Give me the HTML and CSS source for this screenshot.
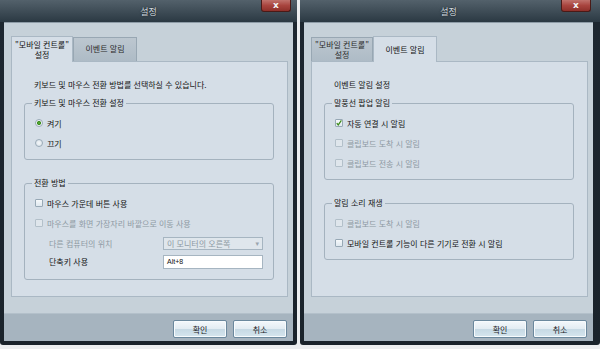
FILE: index.html
```html
<!DOCTYPE html>
<html lang="ko">
<head>
    <meta charset="UTF-8">
    <title>설정</title>
    <link rel="stylesheet" href="styles.css">
</head>
<body>

    <div class="window">
        <div class="titlebar">
            <span></span>
            <span class="title">설정</span>
            <span class="close">x</span>
        </div>
        <div class="client">
            <div class="tabs">
                <div class="tab first active">"모바일 컨트롤"<br>설정</div>
                <div class="tab second">이벤트 알림</div>
            </div>
            <div class="panel">
                <p class="intro">키보드 및 마우스 전환 방법를 선택하실 수 있습니다.</p>

                <fieldset class="group">
                    <legend>키보드 및 마우스 전환 설정</legend>
                    <div class="opt"><span class="radio on"></span>켜기</div>
                    <div class="opt"><span class="radio"></span>끄기</div>
                </fieldset>

                <fieldset class="group">
                    <legend>전환 방법</legend>
                    <div class="opt"><span class="check"></span>마우스 가운데 버튼 사용</div>
                    <div class="opt disabled"><span class="check"></span>마우스를 화면 가장자리 바깥으로 이동 사용</div>
                    <div class="fields">
                        <div class="field disabled">
                            <span class="field-label">다른 컴퓨터의 위치</span>
                            <span class="select">이 모니터의 오른쪽<span class="arrow">▾</span></span>
                        </div>
                        <div class="field">
                            <span class="field-label">단축키 사용</span>
                            <span class="textbox">Alt+8</span>
                        </div>
                    </div>
                </fieldset>
            </div>
            <div class="footer">
                <button>확인</button>
                <button>취소</button>
            </div>
        </div>
    </div>

    <div class="window wide">
        <div class="titlebar">
            <span></span>
            <span class="title">설정</span>
            <span class="close">x</span>
        </div>
        <div class="client">
            <div class="tabs">
                <div class="tab first">"모바일 컨트롤"<br>설정</div>
                <div class="tab second active">이벤트 알림</div>
            </div>
            <div class="panel">
                <p class="intro">이벤트 알림 설정</p>

                <fieldset class="group">
                    <legend>말풍선 팝업 알림</legend>
                    <div class="opt">
                        <span class="check">
                            <svg width="8" height="8" viewBox="0 0 8 8"><path d="M1 4.2 L3 6.6 L7.2 0.6" fill="none" stroke="#3a8a16" stroke-width="1.6"/></svg>
                        </span>자동 연결 시 알림
                    </div>
                    <div class="opt disabled"><span class="check"></span>클립보드 도착 시 알림</div>
                    <div class="opt disabled"><span class="check"></span>클립보드 전송 시 알림</div>
                </fieldset>

                <fieldset class="group">
                    <legend>알림 소리 재생</legend>
                    <div class="opt disabled"><span class="check"></span>클립보드 도착 시 알림</div>
                    <div class="opt"><span class="check"></span>모바일 컨트롤 기능이 다른 기기로 전환 시 알림</div>
                </fieldset>
            </div>
            <div class="footer">
                <button>확인</button>
                <button>취소</button>
            </div>
        </div>
    </div>

</body>
</html>
```

FILE: styles.css
```css
body {
    margin: 0;
    display: flex;
    gap: 3px;
    background: #eceef0;
    font-family: "Noto Sans CJK KR", "Noto Sans", sans-serif;
    font-size: 8px;
    color: #141414;
}
.window {
    width: 297px;
    height: 345px;
    box-sizing: border-box;
    padding: 0 4px 4px;
    display: flex;
    flex-direction: column;
    background: linear-gradient(#53616b 0, #2b3943 22px, #1d2730 22px, #1a232b 100%);
    border-radius: 0 0 3px 3px;
}
.window.wide {
    width: 300px;
    padding-right: 7px;
}
.titlebar {
    height: 22px;
    display: grid;
    grid-template-columns: 1fr auto 1fr;
    align-items: start;
}
.title {
    margin-top: 6px;
    font-size: 9px;
    line-height: 11px;
    color: #d2d9de;
    text-shadow: 0 0 2px #10181e;
}
.close {
    justify-self: end;
    width: 30px;
    height: 12px;
    margin-right: 2px;
    box-sizing: border-box;
    border: 1px solid #4a1a17;
    border-top: none;
    border-radius: 0 0 3px 3px;
    background: linear-gradient(#c0726c, #a8443e 50%, #8e302a);
    color: #f4f4f4;
    font-family: "DejaVu Sans", sans-serif;
    font-weight: bold;
    font-size: 9px;
    line-height: 10px;
    text-align: center;
}
.client {
    flex: 1;
    display: flex;
    flex-direction: column;
    background: #c6d1d9;
    border-top: 1px solid #8e9ca7;
}
.tabs {
    display: flex;
    align-items: flex-end;
    padding: 12px 0 0 7px;
    height: 26px;
}
.tab {
    box-sizing: border-box;
    height: 24px;
    border: 1px solid #98a7b3;
    border-bottom: none;
    background: linear-gradient(#bcc7d0, #aebbc6);
    text-align: center;
    line-height: 10px;
    color: #2b2b2b;
}
.tab.first {
    width: 62px;
    padding-top: 2px;
}
.tab.second {
    width: 64px;
    line-height: 22px;
}
.tab.active {
    height: 26px;
    margin-bottom: -1px;
    position: relative;
    background: #d5dee7;
    border-color: #aab8c4;
    color: #111;
}
.tab.first.active {
    padding-top: 3px;
}
.tab.second.active {
    line-height: 25px;
}
.panel {
    height: 236px;
    box-sizing: border-box;
    margin: 0 5px 0 7px;
    padding: 17px 13px 0 12px;
    background: #d5dee7;
    border: 1px solid #aab8c4;
}
.intro {
    margin: 0 0 7px 10px;
    line-height: 12px;
}
.group {
    margin: 0 0 18px;
    padding: 5px 7px 6px;
    border: 1px solid #a4b2be;
    border-radius: 3px;
}
.group legend {
    padding: 0 2px;
    line-height: 10px;
}
.opt {
    display: flex;
    align-items: center;
    gap: 4px;
    height: 20px;
    margin-left: 3px;
}
.disabled {
    color: #8d99a3;
}
.check {
    width: 8px;
    height: 8px;
    display: flex;
    box-sizing: border-box;
    border: 1px solid #98a9b6;
    border-radius: 1px;
    background: linear-gradient(#f6f9fb, #dfe8ef);
}
.check svg {
    margin: -1px 0 0 0;
}
.disabled .check {
    border-color: #b3c0ca;
    background: #dfe6ec;
}
.radio {
    width: 8px;
    height: 8px;
    box-sizing: border-box;
    border: 1px solid #9aabb8;
    border-radius: 50%;
    background: radial-gradient(circle, #f4f7f9, #d6dfe6);
}
.radio.on {
    background: radial-gradient(circle, #5cb63a 0, #3f8e22 1.6px, #f2f6f8 2.4px, #d6dfe6);
}
.fields {
    padding-bottom: 4px;
}
.field {
    display: flex;
    align-items: center;
    height: 15px;
    margin: 3px 0 0 17px;
}
.field-label {
    width: 114px;
}
.select, .textbox {
    width: 100px;
    box-sizing: border-box;
    border: 1px solid #a6b5c1;
    display: flex;
    align-items: center;
    padding-left: 3px;
}
.select {
    height: 13px;
    background: #dfe6ec;
    color: #8d99a3;
}
.arrow {
    margin-left: auto;
    margin-right: 3px;
    font-size: 7px;
    color: #9aa5ae;
    font-family: "DejaVu Sans", sans-serif;
}
.textbox {
    height: 14px;
    background: #fff;
    font-family: "Liberation Sans", sans-serif;
    font-size: 7px;
    color: #111;
}
.footer {
    margin-top: 16px;
    flex: 1;
    display: flex;
    justify-content: flex-end;
    align-items: flex-start;
    gap: 6px;
    padding: 6px 6px 0 0;
    background: #a6b4bf;
    border-top: 1px solid #b3c0ca;
}
button {
    width: 54px;
    height: 18px;
    padding: 0;
    border: 1px solid #6b889d;
    border-radius: 2px;
    background: linear-gradient(#f4f8fb, #e2ecf2 50%, #c6d9e4 51%, #d6e6ee);
    font-family: "Noto Sans CJK KR", "Noto Sans", sans-serif;
    font-size: 8px;
    color: #1d1d1d;
    box-shadow: inset 0 0 0 1px #f7fbfd;
}
```
